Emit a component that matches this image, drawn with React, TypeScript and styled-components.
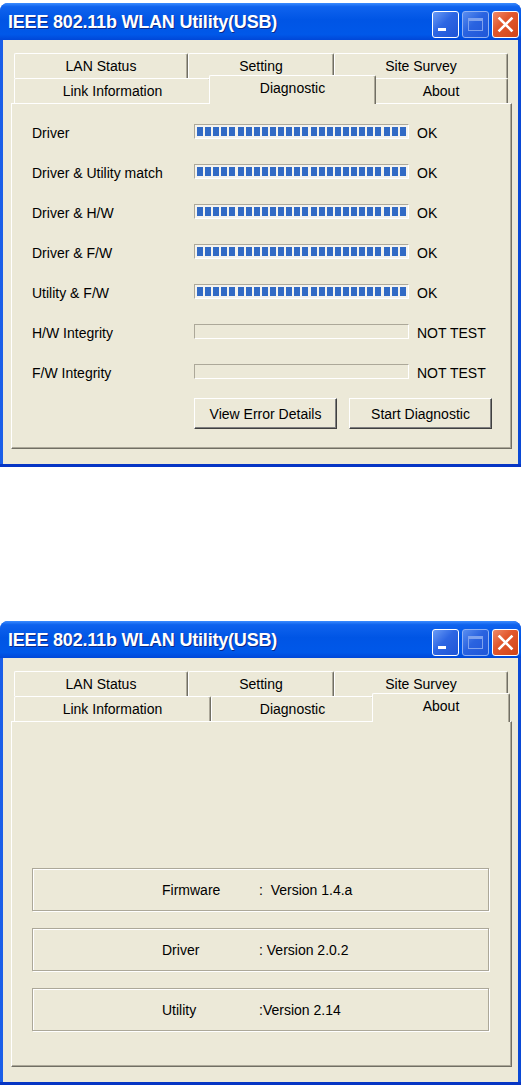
import styled, { createGlobalStyle } from "styled-components";

const GlobalStyle = createGlobalStyle`
    html, body {
        margin: 0;
        padding: 0;
        background: #ffffff;
    }
    body {
        font-family: "Liberation Sans", Arial, sans-serif;
        color: #000;
    }
`

const Page = styled.div`
    display: flex;
    flex-direction: column;
    gap: 154px;
    padding-top: 3px;
    width: 523px;
`

const Window = styled.div`
    width: 521px;
    height: 464px;
    display: flex;
    flex-direction: column;
    border-radius: 8px 8px 0 0;
    overflow: hidden;
    background: linear-gradient(90deg, #1a5ee8 0%, #0d52e0 50%, #0a49d6 100%);
    box-shadow: inset 0 -3px 0 #0635c4;
`

const TitleBar = styled.div`
    height: 37px;
    flex-shrink: 0;
    display: flex;
    align-items: center;
    padding: 0 4px 0 8px;
    background: linear-gradient(180deg, #3b8cff 0%, #0f63ee 10%, #0055e5 45%, #0058e9 85%, #0047d8 100%);
`

const Title = styled.div`
    flex: 1;
    color: #fff;
    font-weight: bold;
    font-size: 18px;
    letter-spacing: -0.2px;
    text-shadow: 1px 1px 0 #0b2a8a;
    padding-top: 2px;
`

const Controls = styled.div`
    display: flex;
    gap: 3px;
    margin-top: 6px;
    margin-right: -2px;
`

const CtrlButton = styled.div<{ $kind: "min" | "max" | "close" }>`
    width: 27px;
    height: 27px;
    box-sizing: border-box;
    border-radius: 3px;
    display: flex;
    align-items: center;
    justify-content: center;
    border: 1px solid ${props => props.$kind === "max" ? "#8fb0f2" : "#ffffff"};
    background: ${props => props.$kind === "close"
        ? "linear-gradient(135deg, #f08a6a 0%, #e2582e 40%, #d04418 100%)"
        : props.$kind === "max"
            ? "linear-gradient(135deg, #5a8ef0 0%, #2a63e0 45%, #1f56d8 100%)"
            : "linear-gradient(135deg, #6a9cf6 0%, #2d66e3 45%, #1f55d6 100%)"};
`

const Client = styled.div`
    flex: 1;
    margin: 0 3px 3px 3px;
    background: #ece9d8;
    padding: 13px 6px 15px 8px;
    display: flex;
    flex-direction: column;
`

const TabArea = styled.div`
    display: flex;
    flex-direction: column;
    padding: 0 4px 0 3px;
`

const TabRow = styled.div`
    display: flex;
    height: 25px;
`

const Tab = styled.div<{ $width: number; $active?: boolean }>`
    width: ${props => props.$width}px;
    box-sizing: border-box;
    flex-shrink: 0;
    display: flex;
    align-items: center;
    justify-content: center;
    font-size: 14px;
    background: #ece9d8;
    border-top: 1px solid #ffffff;
    border-left: 1px solid #ffffff;
    border-right: 1px solid #716f64;
    box-shadow: inset -1px 0 0 #aca899;
    border-radius: 2px 2px 0 0;
    position: relative;
    ${props => props.$active ? `
        margin: -3px -2px -1px -2px;
        width: ${props.$width + 4}px;
        height: 29px;
        padding-bottom: 5px;
        z-index: 2;
    ` : ""}
`

const Panel = styled.div`
    height: 346px;
    box-sizing: border-box;
    border-top: 1px solid #ffffff;
    border-left: 1px solid #ffffff;
    border-right: 1px solid #716f64;
    border-bottom: 1px solid #716f64;
    box-shadow: inset -1px -1px 0 #aca899;
    display: flex;
    flex-direction: column;
`

const CheckList = styled.div`
    display: flex;
    flex-direction: column;
    padding: 7px 0 0 20px;
`

const CheckRow = styled.div`
    display: flex;
    align-items: center;
    height: 40px;
    font-size: 14px;
`

const CheckName = styled.div`
    width: 162px;
    padding-top: 3px;
`

const Bar = styled.div<{ $filled: boolean }>`
    width: 215px;
    height: 15px;
    box-sizing: border-box;
    border-top: 1px solid #aca899;
    border-left: 1px solid #aca899;
    border-bottom: 1px solid #ffffff;
    border-right: 1px solid #ffffff;
    background: ${props => props.$filled ? "#f4f3ee" : "#ece9d8"};
    padding: 2px 2px 2px 2px;
    display: flex;
    justify-content: space-between;
`

const Block = styled.span`
    width: 6px;
    height: 100%;
    background: #316ac5;
`

const Status = styled.div`
    margin-left: 8px;
    padding-top: 4px;
`

const ButtonRow = styled.div`
    display: flex;
    gap: 12px;
    padding-left: 182px;
    margin-top: 7px;
`

const PushButton = styled.div`
    width: 143px;
    height: 31px;
    box-sizing: border-box;
    display: flex;
    align-items: center;
    justify-content: center;
    font-size: 14px;
    background: #ece9d8;
    border-top: 1px solid #ffffff;
    border-left: 1px solid #ffffff;
    border-right: 1px solid #404040;
    border-bottom: 1px solid #404040;
    box-shadow: inset -1px -1px 0 #808080;
`

const VersionList = styled.div`
    display: flex;
    flex-direction: column;
    gap: 17px;
    padding: 146px 22px 0 20px;
`

const VersionBox = styled.div`
    height: 43px;
    box-sizing: border-box;
    border: 1px solid #aca899;
    box-shadow: 1px 1px 0 #ffffff, inset 1px 1px 0 #ffffff;
    display: flex;
    align-items: center;
    padding-left: 129px;
    font-size: 14px;
`

const VersionName = styled.div`
    width: 97px;
`

const VersionValue = styled.div`
    white-space: pre;
`

const checks = [
    { name: "Driver", status: "OK" },
    { name: "Driver & Utility match", status: "OK" },
    { name: "Driver & H/W", status: "OK" },
    { name: "Driver & F/W", status: "OK" },
    { name: "Utility & F/W", status: "OK" },
    { name: "H/W Integrity", status: "NOT TEST" },
    { name: "F/W Integrity", status: "NOT TEST" },
];

const versions = [
    { name: "Firmware", value: ":  Version 1.4.a" },
    { name: "Driver", value: ": Version 2.0.2" },
    { name: "Utility", value: ":Version 2.14" },
];

const topTabs = [
    { label: "LAN Status", width: 174 },
    { label: "Setting", width: 146 },
    { label: "Site Survey", width: 174 },
];

const bottomTabs = [
    { label: "Link Information", width: 197 },
    { label: "Diagnostic", width: 163 },
    { label: "About", width: 134 },
];

function WindowControls() {
    return (
        <Controls>
            <CtrlButton $kind="min">
                <svg width="25" height="25" viewBox="0 0 25 25">
                    <rect x="5" y="16" width="8" height="3" fill="#ffffff" />
                </svg>
            </CtrlButton>
            <CtrlButton $kind="max">
                <svg width="25" height="25" viewBox="0 0 25 25">
                    <rect x="5.5" y="6.5" width="14" height="12" fill="none" stroke="#7ea2ee" strokeWidth="1" />
                    <rect x="5" y="6" width="15" height="3" fill="#7ea2ee" />
                </svg>
            </CtrlButton>
            <CtrlButton $kind="close">
                <svg width="25" height="25" viewBox="0 0 25 25">
                    <path d="M6.5 6.5 L18.5 18.5 M18.5 6.5 L6.5 18.5" stroke="#ffffff" strokeWidth="2.6" strokeLinecap="square" />
                </svg>
            </CtrlButton>
        </Controls>
    );
}

function Tabs({ active }: { active: string }) {
    return (
        <TabArea>
            <TabRow>
                {topTabs.map(tab =>
                    <Tab key={tab.label} $width={tab.width} $active={tab.label === active}>{tab.label}</Tab>
                )}
            </TabRow>
            <TabRow>
                {bottomTabs.map(tab =>
                    <Tab key={tab.label} $width={tab.width} $active={tab.label === active}>{tab.label}</Tab>
                )}
            </TabRow>
        </TabArea>
    );
}

function UtilityWindow({ active, children }: { active: string, children: React.ReactNode }) {
    return (
        <Window>
            <TitleBar>
                <Title>IEEE 802.11b WLAN Utility(USB)</Title>
                <WindowControls />
            </TitleBar>
            <Client>
                <Tabs active={active} />
                <Panel>{children}</Panel>
            </Client>
        </Window>
    );
}

function App() {
    return (
        <>
            <GlobalStyle />
            <Page>
                <UtilityWindow active="Diagnostic">
                    <CheckList>
                        {checks.map(check =>
                            <CheckRow key={check.name}>
                                <CheckName>{check.name}</CheckName>
                                <Bar $filled={check.status === "OK"}>
                                    {check.status === "OK" ?
                                        Array.from({ length: 26 }).map((_, idx) => <Block key={idx} />) :
                                        null}
                                </Bar>
                                <Status>{check.status}</Status>
                            </CheckRow>
                        )}
                    </CheckList>
                    <ButtonRow>
                        <PushButton>View Error Details</PushButton>
                        <PushButton>Start Diagnostic</PushButton>
                    </ButtonRow>
                </UtilityWindow>
                <UtilityWindow active="About">
                    <VersionList>
                        {versions.map(v =>
                            <VersionBox key={v.name}>
                                <VersionName>{v.name}</VersionName>
                                <VersionValue>{v.value}</VersionValue>
                            </VersionBox>
                        )}
                    </VersionList>
                </UtilityWindow>
            </Page>
        </>
    );
}

export default App;
